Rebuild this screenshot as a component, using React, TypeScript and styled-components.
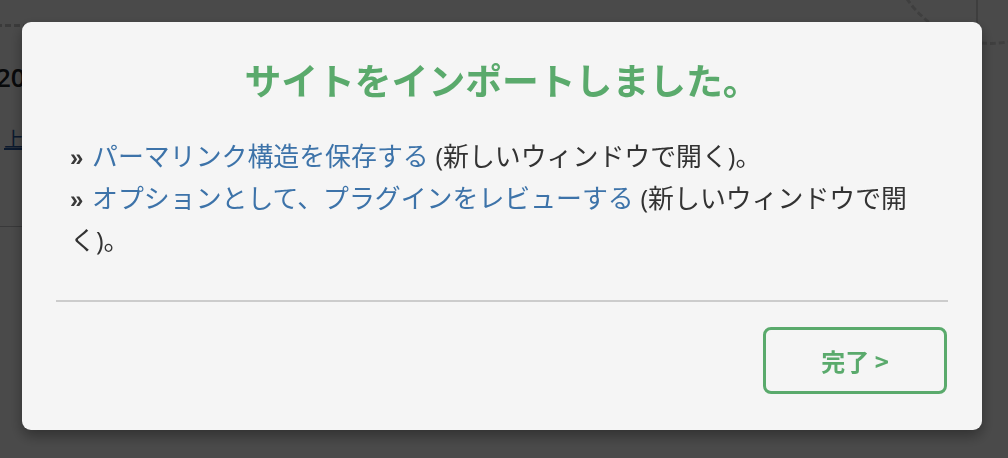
import React from "react";
import styled, { createGlobalStyle } from "styled-components";

const Global = createGlobalStyle`
  html, body { margin: 0; padding: 0; background: #ffffff; }
  body { font-family: "Open Sans", "Noto Sans CJK JP", sans-serif; }
`;

const Page = styled.div`
  width: 1008px;
  height: 458px;
  position: relative;
  overflow: hidden;
  background: #ffffff;
`;

const BackContent = styled.div`
  display: flex;
  flex-direction: column;
  margin-left: -4px;
`;

const DashedTop = styled.div`
  margin-top: 24px;
  height: 0;
  width: 60px;
  border-top: 3px dashed #c8c8c8;
`;

const BackHeading = styled.div`
  margin-top: 32px;
  font-family: "Open Sans", sans-serif;
  font-weight: 600;
  font-size: 26px;
  color: #1d2327;
  line-height: 36px;
`;

const BackLink = styled.a`
  margin-top: 30px;
  margin-left: 8px;
  font-family: "Noto Sans CJK JP", sans-serif;
  font-size: 20px;
  color: #2a5aa0;
  text-decoration: underline;
  line-height: 28px;
`;

const BackRule = styled.div`
  margin-top: 73px;
  height: 1px;
  width: 100px;
  background: #c3c4c7;
`;

const BackVLine = styled.div`
  position: absolute;
  left: 976px;
  top: 0;
  width: 2px;
  height: 30px;
  background: #d4d4d4;
`;

const BackCircle = styled.div`
  position: absolute;
  left: 888px;
  top: -161px;
  width: 200px;
  height: 200px;
  border-radius: 50%;
  border: 3px dashed #d8d8d8;
`;

const Overlay = styled.div`
  position: fixed;
  inset: 0;
  background: rgba(0, 0, 0, 0.71);
  display: flex;
  align-items: flex-start;
  padding: 22px 0 0 22px;
  box-sizing: border-box;
`;

const Modal = styled.div`
  width: 960px;
  height: 408px;
  box-sizing: border-box;
  background: #f5f5f5;
  border-radius: 9px;
  box-shadow: 0 6px 14px rgba(0, 0, 0, 0.35);
  padding: 0 34px;
  display: flex;
  flex-direction: column;
`;

const Title = styled.h2`
  margin: 0;
  padding-top: 32px;
  text-align: center;
  font-family: "Noto Sans CJK JP", sans-serif;
  font-weight: 700;
  font-size: 36.8px;
  line-height: 51px;
  color: #5aaa6c;
`;

const Body = styled.div`
  margin: 31px 24px 0 14px;
  font-family: "Open Sans", "Noto Sans CJK JP", sans-serif;
  font-size: 25.9px;
  line-height: 40px;
  color: #333333;
`;

const Line = styled.div``;

const Quote = styled.span`
  font-family: "Liberation Sans", sans-serif;
  font-weight: 700;
  font-size: 24px;
  color: #3a3a3a;
  margin-right: 2px;
`;

const Link = styled.a`
  color: #3d73a9;
  text-decoration: none;
`;

const Divider = styled.hr`
  margin: 40px 0 0;
  border: none;
  height: 2px;
  background: #cccccc;
`;

const Footer = styled.div`
  display: flex;
  justify-content: flex-end;
  padding-top: 25px;
  padding-right: 1px;
`;

const DoneButton = styled.button`
  width: 184px;
  height: 67px;
  box-sizing: border-box;
  border: 3px solid #5aaa6c;
  border-radius: 8px;
  background: transparent;
  color: #5aaa6c;
  font-family: "Noto Sans CJK JP", sans-serif;
  font-weight: 700;
  font-size: 24px;
  cursor: pointer;
`;

export default function App() {
  return (
    <>
      <Global />
      <Page>
        <BackContent>
          <DashedTop />
          <BackHeading>2024</BackHeading>
          <BackLink>上書き</BackLink>
          <BackRule />
        </BackContent>
        <BackCircle />
        <BackVLine />
        <Overlay>
          <Modal>
            <Title>サイトをインポートしました。</Title>
            <Body>
              <Line>
                <Quote>»</Quote> <Link href="#">パーマリンク構造を保存する</Link> (新しいウィンドウで開く)。
              </Line>
              <Line>
                <Quote>»</Quote> <Link href="#">オプションとして、プラグインをレビューする</Link> (新しいウィンドウで開く)。
              </Line>
            </Body>
            <Divider />
            <Footer>
              <DoneButton>完了 &gt;</DoneButton>
            </Footer>
          </Modal>
        </Overlay>
      </Page>
    </>
  );
}
